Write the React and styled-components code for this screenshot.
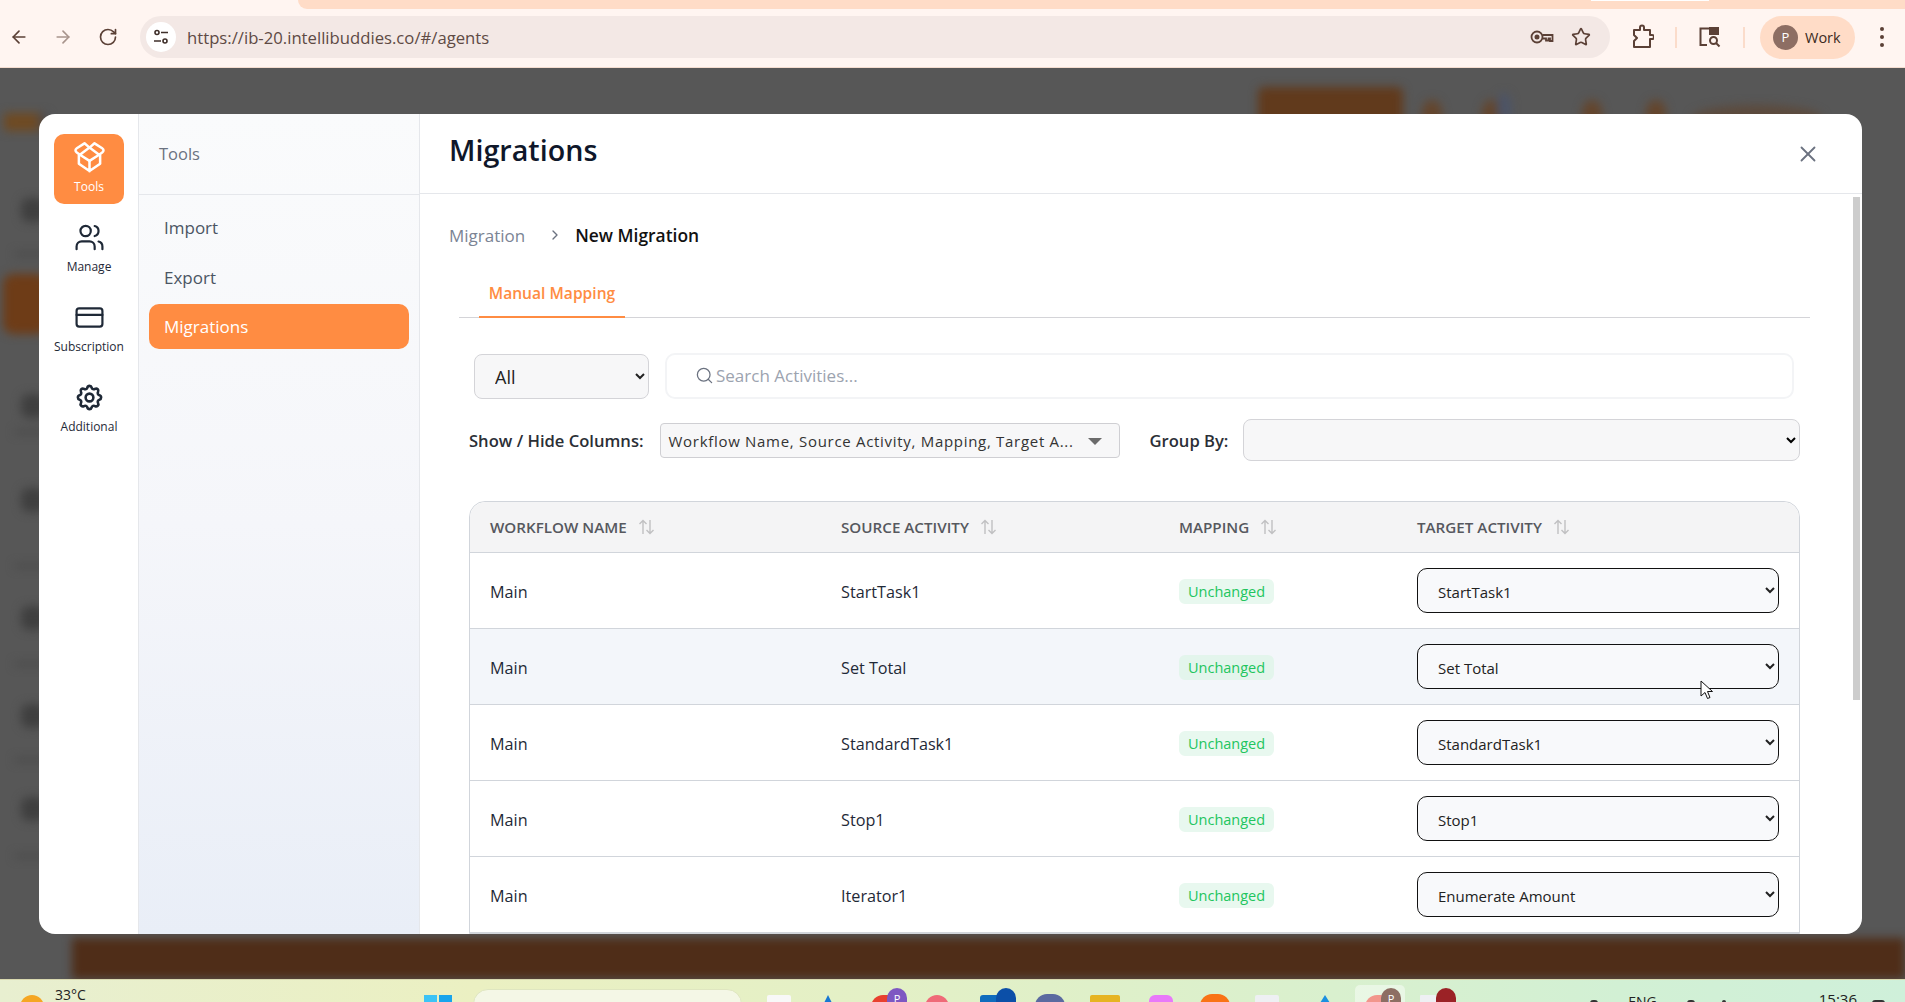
import React from "react";
import styled, { createGlobalStyle } from "styled-components";
import { ArrowLeft, ArrowRight, RotateCw, Star, Users, CreditCard, ChevronRight, X, Search } from "lucide-react";
import { TbSettings } from "react-icons/tb";

const Global = createGlobalStyle`
  html, body { margin: 0; padding: 0; height: 100%; overflow: hidden; }
  body { font-family: "Open Sans", "Noto Sans", "Liberation Sans", sans-serif; color: #111827; }
  * { box-sizing: border-box; }
`;

const Page = styled.div`
  width: 1905px;
  height: 1002px;
  display: flex;
  flex-direction: column;
  overflow: hidden;
  background: #575757;
`;

/* browser chrome */
const TabStrip = styled.div`
  height: 9px;
  background: #fff5f1;
  padding-left: 298px;
  display: flex;
`;
const TabFill = styled.div`
  flex: 1;
  background: #ffdcc7;
  border-bottom-left-radius: 12px;
  padding-left: 1293px;
`;
const TabEdge = styled.div`
  width: 118px;
  height: 1px;
  background: #fff;
`;
const Toolbar = styled.div`
  height: 59px;
  background: #fff5f1;
  border-bottom: 1px solid #f4dccf;
  display: flex;
  align-items: center;
  padding: 0 0 2px 9px;
  color: #5b4036;
`;
const NavButton = styled.div`
  width: 44px;
  display: flex;
  padding-left: ${(p) => p.$inset || 0}px;
  color: ${(p) => (p.$off ? "#a8948c" : "#5b4036")};
`;
const Omnibox = styled.div`
  width: 1470px;
  height: 42px;
  margin-left: -1px;
  border-radius: 21px;
  background: #f3e8e5;
  display: flex;
  align-items: center;
  padding: 0 19px 0 6px;
`;
const SiteIcon = styled.div`
  width: 30px;
  height: 30px;
  border-radius: 50%;
  background: #fff;
  display: flex;
  align-items: center;
  justify-content: center;
`;
const Url = styled.span`
  flex: 1;
  margin-left: 11px;
  font-size: 16.7px;
  color: #5e4a44;
`;
const OmniIcons = styled.div`
  display: flex;
  align-items: center;
  gap: 17px;
`;
const ToolbarRight = styled.div`
  display: flex;
  align-items: center;
  margin-left: 22px;
`;
const Divider = styled.div`
  width: 2px;
  height: 21px;
  background: #fbdccb;
  margin: 0 ${(p) => p.$right}px 0 ${(p) => p.$left}px;
`;
const ProfilePill = styled.div`
  width: 95px;
  height: 43px;
  border-radius: 22px;
  background: #ffdcc7;
  display: flex;
  align-items: center;
  padding-left: 13px;
  gap: 7px;
  font-size: 14.5px;
  color: #3b2a22;
`;
const Avatar = styled.div`
  width: 25px;
  height: 25px;
  border-radius: 50%;
  background: #8d6e63;
  color: #fff;
  font-size: 13px;
  display: flex;
  align-items: center;
  justify-content: center;
`;
const MenuDots = styled.div`
  display: flex;
  flex-direction: column;
  gap: 4px;
  margin-left: 25px;
  span {
    width: 4px;
    height: 4px;
    border-radius: 50%;
    background: #5b4036;
  }
`;

/* dimmed app behind the dialog */
const Stage = styled.div`
  position: relative;
  flex: 1;
  overflow: hidden;
  background: #575757;
`;
const Backdrop = styled.div`
  position: absolute;
  inset: 0;
  filter: blur(5px);
  display: flex;
  flex-direction: column;
`;
const BackTop = styled.div`
  display: flex;
  align-items: flex-start;
  padding-top: 19px;
`;
const BackLogo = styled.div`
  width: 44px;
  height: 18px;
  margin: 26px 0 0 4px;
  border-radius: 4px;
  background: linear-gradient(90deg, #6f4a22 0 70%, #3f4a5e 100%);
`;
const BackActions = styled.div`
  margin-left: 1210px;
  display: flex;
  align-items: flex-start;
`;
const BackButton = styled.div`
  width: 145px;
  height: 40px;
  border-radius: 6px;
  background: #613a1c;
`;
const BackDot = styled.div`
  width: ${(p) => p.$w || 20}px;
  height: 26px;
  margin-top: ${(p) => p.$top || 13}px;
  margin-left: ${(p) => p.$gap}px;
  border-radius: 50% 50% 0 0;
  background: ${(p) => p.$c || "#64452c"};
`;
const BackRail = styled.div`
  flex: 1;
  display: flex;
  flex-direction: column;
  padding: 67px 0 0 3px;
`;
const BackTile = styled.div`
  width: 44px;
  height: 60px;
  margin-top: 18px;
  margin-bottom: 60px;
  border-radius: 10px;
  background: #6e3c17;
`;
const BackIcon = styled.div`
  width: 24px;
  height: 24px;
  margin-left: 18px;
  border-radius: 8px;
  background: #3f3f3f;
`;
const BackLabel = styled.div`
  width: 30px;
  height: 4px;
  margin: ${(p) => p.$before}px 0 ${(p) => p.$after}px 12px;
  background: #484848;
`;
const BackFooter = styled.div`
  height: 41px;
  margin-left: 72px;
  background: #4f2d18;
`;

/* dialog */
const Modal = styled.div`
  position: relative;
  width: 1823px;
  height: 820px;
  margin: 46px 0 0 39px;
  background: #fff;
  border-radius: 16px;
  display: flex;
  overflow: hidden;
`;
const Rail = styled.nav`
  width: 100px;
  border-right: 1px solid #e5e7eb;
  padding: 20px 14px 20px 15px;
  display: flex;
  flex-direction: column;
  gap: 10px;
`;
const RailItem = styled.div`
  height: 70px;
  border-radius: 10px;
  background: ${(p) => (p.$active ? "#ff8c42" : "transparent")};
  color: ${(p) => (p.$active ? "#fff" : "#1f2937")};
  display: flex;
  flex-direction: column;
  align-items: center;
  padding-top: 8px;
  font-size: 12px;
  line-height: 16px;
  white-space: nowrap;
  svg {
    height: 31px;
    margin-bottom: 6px;
  }
`;
const ToolsPanel = styled.aside`
  width: 281px;
  border-right: 1px solid #e5e7eb;
  background: linear-gradient(180deg, #fafbfc 0%, #f5f6fa 50%, #e9eef7 100%);
`;
const PanelHead = styled.div`
  height: 81px;
  border-bottom: 1px solid #e5e7eb;
  padding: 25px 0 0 20px;
  font-size: 16.5px;
  line-height: 30px;
  color: #6b7280;
`;
const PanelList = styled.div`
  display: flex;
  flex-direction: column;
  gap: 4.5px;
  padding: 10px 10px 0;
`;
const PanelItem = styled.div`
  height: 45px;
  line-height: 46px;
  padding-left: 15px;
  border-radius: 10px;
  font-size: 17px;
  background: ${(p) => (p.$active ? "#ff8c42" : "transparent")};
  color: ${(p) => (p.$active ? "#fff" : "#4b5563")};
`;
const Main = styled.main`
  flex: 1;
  min-width: 0;
  display: flex;
  flex-direction: column;
`;
const MainHead = styled.header`
  height: 80px;
  flex: none;
  border-bottom: 1px solid #e5e7eb;
  display: flex;
  justify-content: space-between;
  padding: 13px 41px 0 29px;
`;
const Title = styled.h1`
  margin: 0;
  font-size: 28.7px;
  line-height: 46px;
  font-weight: 600;
  color: #0f172a;
`;
const CloseIcon = styled(X)`
  margin-top: 14px;
  color: #6b7280;
`;
const Scroller = styled.div`
  flex: 1;
  overflow: hidden;
  padding: 28px 52px 0 29px;
`;
const ScrollThumb = styled.div`
  position: absolute;
  top: 83px;
  right: 2px;
  width: 7px;
  height: 503px;
  background: #cdcdcd;
`;
const Crumbs = styled.div`
  display: flex;
  align-items: center;
  height: 26px;
  font-size: 17px;
  color: #7b8494;
`;
const CrumbNow = styled.span`
  font-size: 17.4px;
  font-weight: 600;
  color: #111;
`;
const CrumbArrow = styled(ChevronRight)`
  margin: 0 12px 0 22px;
  color: #6b7280;
`;
const Tabs = styled.div`
  margin: 25px 0 0 10px;
  border-bottom: 1px solid #d4d4d8;
  padding-left: 20px;
  display: flex;
`;
const Tab = styled.div`
  height: 45px;
  width: 146px;
  margin-bottom: -1px;
  border-bottom: 2px solid #ff8c42;
  font-size: 15.6px;
  line-height: 40px;
  font-weight: 600;
  text-align: center;
  white-space: nowrap;
  color: #ff8c42;
`;
const FilterRow = styled.div`
  display: flex;
  gap: 16px;
  margin: 35px 0 0 25px;
`;
const FilterSelect = styled.select`
  width: 175px;
  height: 45px;
  margin-top: 1px;
  padding: 0 0 0 16px;
  border: 1px solid #d4d4d8;
  border-radius: 8px;
  background: #f7f7f8;
  font: 18px "Open Sans", sans-serif;
  color: #222;
`;
const SearchBox = styled.div`
  width: 1129px;
  height: 46px;
  border: 2px solid #f3f4f6;
  border-radius: 10px;
  display: flex;
  align-items: center;
  padding: 0 0 1px 28px;
  gap: 2px;
  font-size: 17px;
  color: #9ca3af;
`;
const SearchGlyph = styled(Search)`
  color: #6b7280;
`;
const ColumnsRow = styled.div`
  display: flex;
  align-items: center;
  margin: 20px 0 0 20px;
`;
const FieldLabel = styled.label`
  font-size: 16.6px;
  font-weight: 600;
  color: #2b2f36;
  white-space: nowrap;
`;
const ColumnPicker = styled.div`
  width: 460px;
  height: 35px;
  margin: 0 30px 0 16px;
  padding: 2px 17px 0 8px;
  border: 1px solid #cfcfd3;
  border-radius: 4px;
  background: #f7f7f8;
  display: flex;
  align-items: center;
  justify-content: space-between;
  font-size: 15px;
  letter-spacing: 0.7px;
  color: #333;
  white-space: nowrap;
`;
const Caret = styled.span`
  width: 0;
  height: 0;
  border-left: 7px solid transparent;
  border-right: 7px solid transparent;
  border-top: 7px solid #6b6b6b;
`;
const GroupSelect = styled.select`
  width: 557px;
  height: 42px;
  margin-left: 15px;
  border: 1px solid #d4d4d8;
  border-radius: 8px;
  background: #f7f7f8;
`;
const Table = styled.div`
  margin: 40px 0 0 20px;
  width: 1331px;
  border: 1px solid #d1d5db;
  border-radius: 16px 16px 0 0;
`;
const Row = styled.div`
  display: grid;
  grid-template-columns: 351px 338px 238px 1fr;
  align-items: center;
  height: ${(p) => (p.$head ? "51px" : "76px")};
  background: ${(p) => (p.$head ? "#f4f4f5" : p.$hover ? "#f3f6fa" : "#fff")};
  border-radius: ${(p) => (p.$head ? "16px 16px 0 0" : "0")};
  border-bottom: 1px solid #d1d5db;
`;
const HeadCell = styled.div`
  display: flex;
  align-items: center;
  gap: 11px;
  padding-left: 20px;
  font-size: 15.2px;
  font-weight: 600;
  color: #56585e;
`;
const Cell = styled.div`
  padding: 2px 0 0 20px;
  font-size: 16.2px;
  color: #1f2937;
`;
const SelectCell = styled.div`
  padding-left: 20px;
`;
const Badge = styled.span`
  display: inline-block;
  height: 25px;
  padding: 0 9px;
  border-radius: 6px;
  background: ${(p) => (p.$hover ? "#e3f5ec" : "#e8f8ef")};
  color: #22c55e;
  font-size: 14.5px;
  line-height: 25px;
`;
const TargetSelect = styled.select`
  width: 362px;
  height: 45px;
  padding: 3px 0 0 16px;
  border: 1.5px solid #111;
  border-radius: 10px;
  background: #f8f9fb;
  font: 15px "Open Sans", sans-serif;
  color: #222;
`;
const Pointer = styled.svg`
  position: absolute;
  left: 1700px;
  top: 612px;
`;

/* taskbar */
const Taskbar = styled.footer`
  height: 23px;
  flex: none;
  border-top: 1px solid #d9d9b0;
  background: linear-gradient(90deg, #e8efd0 0%, #ebf0c2 25%, #e0f0c8 55%, #d2f0d4 85%, #cff0da 100%);
  display: flex;
  overflow: hidden;
  padding-left: 20px;
`;
const Sun = styled.div`
  width: 24px;
  height: 24px;
  margin-top: 15px;
  border-radius: 50%;
  background: #f5a623;
`;
const Temp = styled.span`
  margin: 6px 0 0 11px;
  font-size: 14px;
  line-height: 18px;
  color: #222;
  width: 369px;
`;
const WinLogo = styled.div`
  width: 28px;
  height: 28px;
  margin: 15px 21px 0 0;
  background: linear-gradient(90deg, #3cc3f5 0 48%, transparent 48% 54%, #18a4ec 54%);
`;
const SearchPill = styled.div`
  width: 269px;
  height: 30px;
  margin-top: 9px;
  border-radius: 15px;
  background: #f4f7e6;
  border: 1px solid #dfe6c0;
`;
const Apps = styled.div`
  display: flex;
  margin-left: 25px;
`;
const AppSlot = styled.div`
  position: relative;
  width: ${(p) => p.$w || 55}px;
  height: 40px;
`;
const AppIcon = styled.div`
  width: ${(p) => p.$w || 24}px;
  height: 24px;
  margin-top: ${(p) => p.$top || 15}px;
  border-radius: ${(p) => p.$r || 6}px;
  background: ${(p) => p.$c};
  clip-path: ${(p) => (p.$peak ? "polygon(50% 0, 100% 100%, 0 100%)" : "none")};
`;
const AppBadge = styled.div`
  position: absolute;
  left: 16px;
  top: 8px;
  width: 20px;
  height: 26px;
  border-radius: 10px;
  background: ${(p) => p.$c};
  color: #fff;
  font-size: 11px;
  text-align: center;
  line-height: 22px;
`;
const ActiveTile = styled.div`
  position: absolute;
  left: -10px;
  top: 5px;
  width: 50px;
  height: 30px;
  border-radius: 5px;
  background: rgba(255, 255, 255, 0.45);
`;
const Tray = styled.div`
  margin-left: auto;
  display: flex;
  padding-right: 20px;
  line-height: 18px;
  color: #222;
`;
const TrayText = styled.span`
  margin-top: ${(p) => p.$top}px;
  margin-left: ${(p) => p.$gap}px;
  font-size: ${(p) => p.$size}px;
`;
const TrayDot = styled.span`
  width: ${(p) => p.$w || 8}px;
  height: 8px;
  margin-top: 20px;
  margin-left: ${(p) => p.$gap}px;
  border-radius: 3px;
  background: #333;
`;

const PackageIcon = ({ size = 31 }) => (
  <svg width={size} height={size} viewBox="1.5 2 21 21" fill="none" stroke="currentColor" strokeWidth="1.7" strokeLinejoin="round" strokeLinecap="round">
    <path d="M12 5.8 8.6 2.9 3.4 6.2c-1.2.8-1.2 2 0 2.9l2.1 1.5" />
    <path d="M12 5.8l3.4-2.9 5.2 3.3c1.2.8 1.2 2 0 2.9l-2.1 1.5" />
    <path d="M5.5 10.6 12 5.8l6.5 4.8L12 14.8z" />
    <path d="M12 14.8v7M4.8 11v5.7l7.2 5 7.2-5V11" />
  </svg>
);

const SiteTune = () => (
  <svg width="16" height="16" viewBox="0 0 16 16" fill="none" stroke="#3f2f2a" strokeWidth="1.6">
    <circle cx="4" cy="3.5" r="2" />
    <path d="M8 3.5h7M1 12h7" />
    <circle cx="12" cy="12" r="2" />
  </svg>
);
const KeyIcon = () => (
  <svg width="24" height="16" viewBox="0 0 24 16" fill="none" stroke="#5b4036" strokeWidth="1.8">
    <circle cx="7" cy="8" r="5.5" />
    <circle cx="7" cy="8" r="1.6" fill="#5b4036" />
    <path d="M12.5 6h10v6h-2.5v-2.6h-1.5v2.1h-2.5v-2h-3.5" />
  </svg>
);
const PuzzleIcon = () => (
  <svg width="22" height="26" viewBox="0 0 22 26" fill="none" stroke="#5b4036" strokeWidth="2" strokeLinejoin="round">
    <path d="M2 6h6V3.5a2 2 0 0 1 4 0V6h6v5h2a2 2 0 0 1 0 4h-2v8H2v-6l3-3-3-3z" />
  </svg>
);
const TabSearchIcon = () => (
  <svg width="24" height="24" viewBox="0 0 24 24" fill="none" stroke="#5b4036" strokeWidth="2">
    <path d="M9 20H2.5V3.5h17V10" />
    <rect x="12" y="3" width="8" height="6" fill="#5b4036" />
    <circle cx="15.5" cy="15.5" r="3.5" />
    <path d="M18 18l3.5 3.5" />
  </svg>
);
const SortIcon = () => (
  <svg width="17" height="16" viewBox="0 0 17 16" fill="none" stroke="#c0c0c2" strokeWidth="1.4">
    <path d="M5 15V1.5M1.5 5 5 1.5 8.5 5" />
    <path d="M12 1v13.5M8.5 11l3.5 3.5 3.5-3.5" />
  </svg>
);

const rows = [
  ["Main", "StartTask1", "StartTask1"],
  ["Main", "Set Total", "Set Total"],
  ["Main", "StandardTask1", "StandardTask1"],
  ["Main", "Stop1", "Stop1"],
  ["Main", "Iterator1", "Enumerate Amount"],
];
const columns = ["WORKFLOW NAME", "SOURCE ACTIVITY", "MAPPING", "TARGET ACTIVITY"];

function BrowserBar() {
  return (
    <>
      <TabStrip>
        <TabFill>
          <TabEdge />
        </TabFill>
      </TabStrip>
      <Toolbar>
        <NavButton><ArrowLeft size={20} /></NavButton>
        <NavButton $off><ArrowRight size={20} /></NavButton>
        <NavButton $inset={1}><RotateCw size={20} /></NavButton>
        <Omnibox>
          <SiteIcon><SiteTune /></SiteIcon>
          <Url>https://ib-20.intellibuddies.co/#/agents</Url>
          <OmniIcons>
            <KeyIcon />
            <Star size={20} />
          </OmniIcons>
        </Omnibox>
        <ToolbarRight>
          <PuzzleIcon />
          <Divider $left={21} $right={21} />
          <TabSearchIcon />
          <Divider $left={21} $right={15} />
          <ProfilePill>
            <Avatar>P</Avatar>
            Work
          </ProfilePill>
          <MenuDots><span /><span /><span /></MenuDots>
        </ToolbarRight>
      </Toolbar>
    </>
  );
}

function BehindDialog() {
  return (
    <Backdrop>
      <BackTop>
        <BackLogo />
        <BackActions>
          <BackButton />
          <BackDot $gap={19} />
          <BackDot $gap={40} />
          <BackDot $gap={-5} $top={6} $w={14} $c="#4c5468" />
          <BackDot $gap={71} />
          <BackDot $gap={44} />
          <BackDot $gap={26} $top={18} $w={130} $c="#5c4a3c" />
        </BackActions>
      </BackTop>
      <BackRail>
        <BackIcon />
        <BackLabel $before={30} $after={0} />
        <BackTile />
        <BackIcon />
        <BackLabel $before={12} $after={54} />
        <BackIcon />
        <BackLabel $before={52} $after={38} />
        <BackIcon />
        <BackLabel $before={32} $after={38} />
        <BackIcon />
        <BackLabel $before={30} $after={35} />
        <BackIcon />
        <BackLabel $before={33} $after={0} />
      </BackRail>
      <BackFooter />
    </Backdrop>
  );
}

function MappingTable() {
  return (
    <Table>
      <Row $head>
        {columns.map((c) => (
          <HeadCell key={c}>{c}<SortIcon /></HeadCell>
        ))}
      </Row>
      {rows.map((r, i) => (
        <Row key={r[1]} $hover={i === 1}>
          <Cell>{r[0]}</Cell>
          <Cell>{r[1]}</Cell>
          <Cell><Badge $hover={i === 1}>Unchanged</Badge></Cell>
          <SelectCell>
            <TargetSelect defaultValue={r[2]}>
              <option>{r[2]}</option>
            </TargetSelect>
          </SelectCell>
        </Row>
      ))}
    </Table>
  );
}

function Dialog() {
  return (
    <Modal>
      <Rail>
        <RailItem $active><PackageIcon />Tools</RailItem>
        <RailItem><Users size={31} strokeWidth={1.7} />Manage</RailItem>
        <RailItem><CreditCard size={31} strokeWidth={1.7} />Subscription</RailItem>
        <RailItem><TbSettings size={31} />Additional</RailItem>
      </Rail>
      <ToolsPanel>
        <PanelHead>Tools</PanelHead>
        <PanelList>
          <PanelItem>Import</PanelItem>
          <PanelItem>Export</PanelItem>
          <PanelItem $active>Migrations</PanelItem>
        </PanelList>
      </ToolsPanel>
      <Main>
        <MainHead>
          <Title>Migrations</Title>
          <CloseIcon size={26} strokeWidth={1.7} />
        </MainHead>
        <Scroller>
          <Crumbs>
            Migration
            <CrumbArrow size={16} />
            <CrumbNow>New Migration</CrumbNow>
          </Crumbs>
          <Tabs><Tab>Manual Mapping</Tab></Tabs>
          <FilterRow>
            <FilterSelect><option>All</option></FilterSelect>
            <SearchBox>
              <SearchGlyph size={19} strokeWidth={1.6} />
              Search Activities...
            </SearchBox>
          </FilterRow>
          <ColumnsRow>
            <FieldLabel>Show / Hide Columns:</FieldLabel>
            <ColumnPicker>
              Workflow Name, Source Activity, Mapping, Target A...
              <Caret />
            </ColumnPicker>
            <FieldLabel>Group By:</FieldLabel>
            <GroupSelect />
          </ColumnsRow>
          <MappingTable />
        </Scroller>
        <ScrollThumb />
      </Main>
    </Modal>
  );
}

function WinTaskbar() {
  return (
    <Taskbar>
      <Sun />
      <Temp>33°C</Temp>
      <WinLogo />
      <SearchPill />
      <Apps>
        <AppSlot $w={49}><AppIcon $c="#f8f8f8" $r={2} /></AppSlot>
        <AppSlot><AppIcon $c="#1877d2" $r={1} $peak /></AppSlot>
        <AppSlot $w={54}><AppIcon $c="#e8402f" $r={12} $w={28} /><AppBadge $c="#7e57c2">P</AppBadge></AppSlot>
        <AppSlot><AppIcon $c="#ef6a78" $r={12} /></AppSlot>
        <AppSlot><AppIcon $c="#0f6cbd" $r={3} $w={30} /><AppBadge $c="#0b4fa8" /></AppSlot>
        <AppSlot><AppIcon $c="#5b6aa0" $r={12} $w={30} $top={14} /></AppSlot>
        <AppSlot $w={59}><AppIcon $c="#e6b422" $r={2} $w={30} /></AppSlot>
        <AppSlot $w={51}><AppIcon $c="#e879f9" $r={6} /></AppSlot>
        <AppSlot><AppIcon $c="#f97316" $r={12} $w={30} $top={14} /></AppSlot>
        <AppSlot><AppIcon $c="#eef0f3" $r={2} /></AppSlot>
        <AppSlot><AppIcon $c="#1b8fe0" $r={1} $w={30} $peak /></AppSlot>
        <AppSlot>
          <ActiveTile />
          <AppIcon $c="#e8402f" $r={12} $w={28} />
          <AppBadge $c="#8d6e63">P</AppBadge>
        </AppSlot>
        <AppSlot><AppIcon $c="#eef0f3" $r={1} $w={16} /><AppBadge $c="#9b2226" /></AppSlot>
      </Apps>
      <Tray>
        <TrayDot $gap={0} />
        <TrayText $top={13} $size={14} $gap={30}>ENG</TrayText>
        <TrayDot $gap={30} />
        <TrayDot $gap={27} $w={4} />
        <TrayText $top={10} $size={15} $gap={93}>15:36</TrayText>
        <TrayDot $gap={15} $w={13} />
      </Tray>
    </Taskbar>
  );
}

export default function App() {
  return (
    <Page>
      <Global />
      <BrowserBar />
      <Stage>
        <BehindDialog />
        <Dialog />
        <Pointer width="14" height="20" viewBox="0 0 14 20">
          <path d="M1 1v15l4-3.5 2.5 6 2.5-1-2.5-6h5z" fill="#fff" stroke="#111" strokeWidth="1" />
        </Pointer>
      </Stage>
      <WinTaskbar />
    </Page>
  );
}
